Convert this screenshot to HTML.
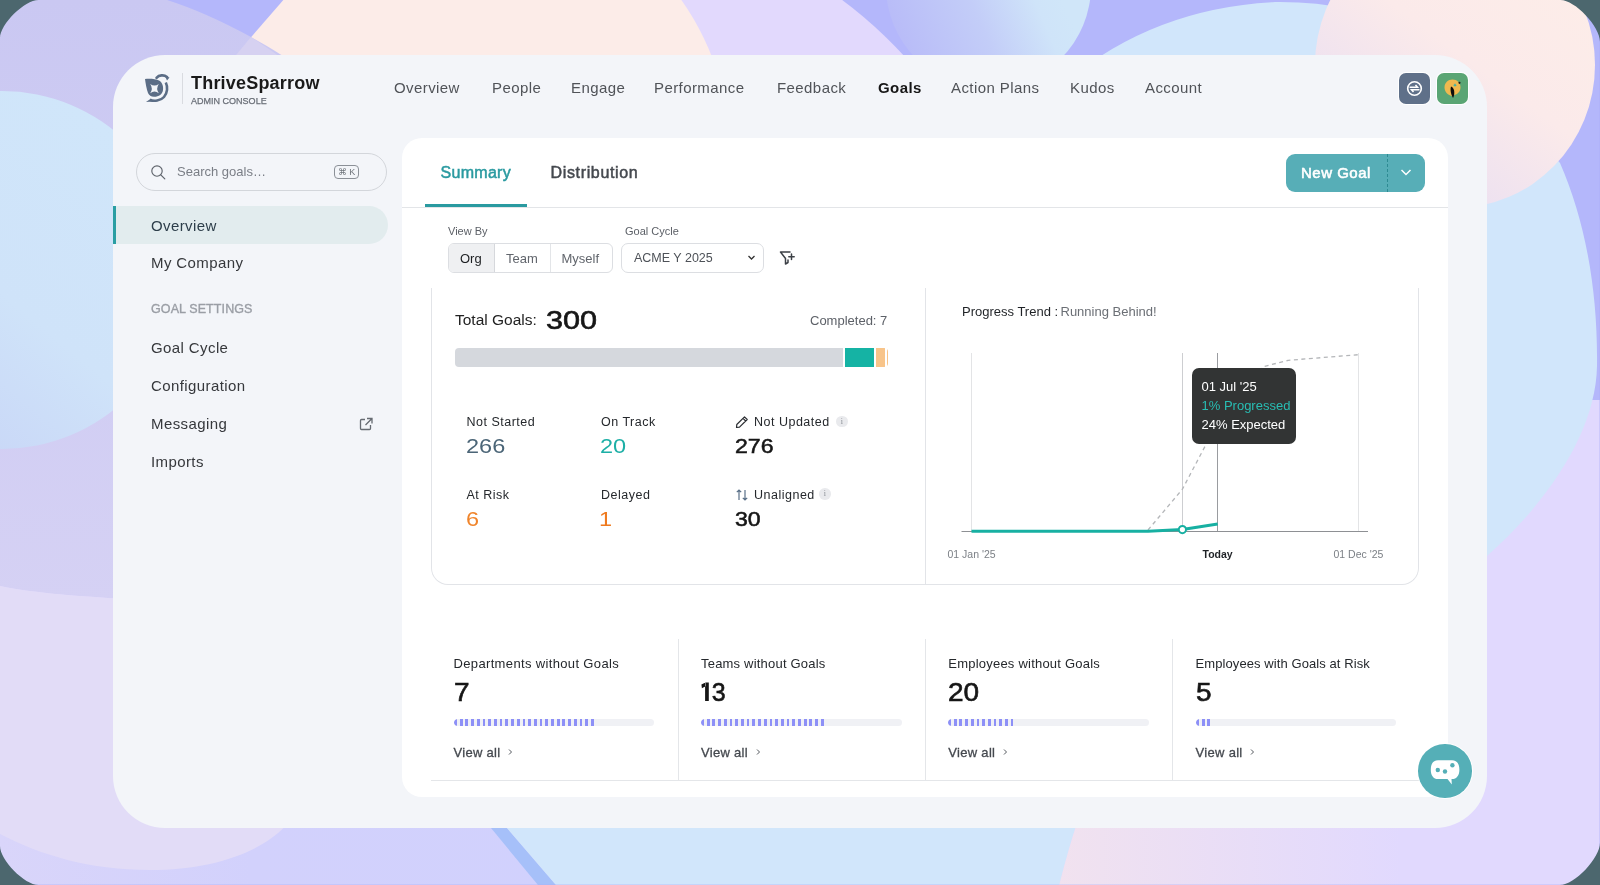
<!DOCTYPE html>
<html><head><meta charset="utf-8">
<style>
*{box-sizing:border-box;margin:0;padding:0}
html,body{width:1600px;height:885px;overflow:hidden;background:#4c676e}
body{font-family:"Liberation Sans",sans-serif;position:relative}
.a{position:absolute}
.t{position:absolute;white-space:nowrap;line-height:1}
#frame{will-change:transform;position:absolute;left:0;top:0;width:1600px;height:885px;overflow:hidden;background:#e1d9fe}
#card{position:absolute;left:113px;top:55px;width:1374px;height:773px;border-radius:52px;background:#f3f5f9}
.nav{font-size:15px;letter-spacing:0.42px;color:#505358;top:80px!important}
.side{font-size:15px;letter-spacing:0.4px;color:#36383c}
.sl{font-size:12.5px;color:#25282c;letter-spacing:0.5px}
.sn{font-size:21px;transform:scaleX(1.12);transform-origin:0 0}
.info{width:11.5px;height:11.5px;border-radius:50%;background:#e9eaed;}
.info::after{content:"i";position:absolute;left:0;top:0;width:11.5px;text-align:center;font-size:8px;line-height:11.5px;color:#8a8e94;font-family:"Liberation Serif",serif}
.ct{font-size:13px;color:#25282c;top:657px;letter-spacing:0.35px}
.cn{font-size:25px;-webkit-text-stroke:0.6px #161616;color:#161616;top:680px;transform:scaleX(1.12);transform-origin:0 0}
.bar{top:718.75px;width:200.5px;height:7.25px;border-radius:4px;background:#f0f1f5;overflow:hidden}
.fill{height:100%;background:repeating-linear-gradient(90deg,#8d90f7 0 2.8px,transparent 2.8px 5.71px);border-radius:4px 0 0 4px}
.va{font-size:13px;color:#45494f;top:745.5px;letter-spacing:0.3px;-webkit-text-stroke:0.3px #45494f}
#panel{position:absolute;left:402px;top:138px;width:1046px;height:659px;border-radius:20px;background:#fff}
</style></head>
<body>
<div id="frame">
<svg class="a" style="left:0;top:0" width="1600" height="885" viewBox="0 0 1600 885">
<defs>
<linearGradient id="gLav" x1="0" y1="0" x2="0" y2="1"><stop offset="0" stop-color="#cac8f2"/><stop offset="1" stop-color="#d5d1f4"/></linearGradient>
<linearGradient id="gBlueC" gradientUnits="userSpaceOnUse" x1="905" y1="62" x2="1060" y2="-5"><stop offset="0" stop-color="#b8bbf8"/><stop offset="0.5" stop-color="#c3cdf8"/><stop offset="0.85" stop-color="#cfe4f9"/><stop offset="1" stop-color="#d0e6f9"/></linearGradient>
<linearGradient id="gPeach" x1="0.8" y1="0.05" x2="0.15" y2="0.95"><stop offset="0" stop-color="#fdede8"/><stop offset="0.45" stop-color="#fbeaea"/><stop offset="1" stop-color="#e5dcf4"/></linearGradient>
<linearGradient id="gPinkB" x1="0" y1="0" x2="1" y2="0"><stop offset="0" stop-color="#f1e2ef"/><stop offset="0.9" stop-color="#e1d9fe"/></linearGradient>
<linearGradient id="gBlueL" x1="0.8" y1="0.1" x2="0.1" y2="0.95"><stop offset="0" stop-color="#d0e6fa"/><stop offset="0.5" stop-color="#cfe3f9"/><stop offset="1" stop-color="#c6d2f6"/></linearGradient>
<linearGradient id="gBotL" x1="0" y1="0" x2="1" y2="0"><stop offset="0" stop-color="#d9d5fa"/><stop offset="0.45" stop-color="#d2d1fc"/><stop offset="1" stop-color="#d1d1fd"/></linearGradient>
</defs>
<rect x="0" y="0" width="1600" height="885" fill="#e1d9fe"/>
<path d="M0,0 H1600 V400 H1480 V80 H0 Z" fill="#b4b7fb"/>
<path d="M600,-10 L828,-10 Q880,25 925,80 L600,80 Z" fill="#e2d9fd"/>
<path d="M292,-10 L214,80 L720,80 Q705,30 674,-10 Z" fill="#fcece8"/>
<path d="M0,0 L167,0 Q205,12 251,37 T305,75 L300,605 Q60,600 0,586 Z" fill="url(#gLav)"/>
<path d="M251,37 L222,72 L300,72 Q280,56 251,37 Z" fill="#d6d1f1"/>
<circle cx="988.5" cy="-14" r="102.5" fill="url(#gBlueC)"/>
<path d="M1068,80 Q1155,8 1275,2 Q1440,0 1540,140 L1560,163 C1585,220 1598,290 1597,366 C1596,430 1550,500 1487,556 L1300,600 Z" fill="#d1e6fb"/>
<ellipse cx="1455" cy="65" rx="140" ry="143" fill="url(#gPeach)"/>
<circle cx="2" cy="270" r="179" fill="url(#gBlueL)"/>
<rect x="0" y="780" width="560" height="105" fill="url(#gBotL)"/>
<path d="M0,586 Q60,600 300,605 L300,800 C290,840 230,870 150,870 C90,870 40,855 0,834 Z" fill="#e2dcf7"/>
<path d="M484.4,820 L500.1,820 L560.3,890 L542.1,890 Z" fill="#a6c0f9"/>
<path d="M500.1,820 L1078,820 Q1068,850 1058,890 L560.3,890 Z" fill="#d1e6fb"/>
<path d="M1078,800 L1440,800 L1440,890 L1058,890 Q1068,850 1078,820 Z" fill="url(#gPinkB)"/>
</svg>
<div id="card"></div>
<div id="panel"></div>


<!-- sidebar -->
<div class="a" style="left:136px;top:153px;width:251px;height:38px;border:1px solid #d3d6db;border-radius:19px"></div>
<svg class="a" style="left:150px;top:164px" width="17" height="17" viewBox="0 0 17 17"><circle cx="7" cy="7" r="5.2" stroke="#5e636b" stroke-width="1.15" fill="none"/><path d="M10.8,10.8 L14.8,14.8" stroke="#5e636b" stroke-width="1.2" stroke-linecap="round"/></svg>
<div class="t" style="left:177px;top:165px;font-size:13px;color:#7a7e86">Search goals&#8230;</div>
<div class="a" style="left:334px;top:165px;width:25px;height:14px;border:1px solid #8b9097;border-radius:4px;font-size:9px;color:#6e737a;line-height:12px;text-align:center">&#8984; K</div>
<div class="a" style="left:113px;top:206px;width:275px;height:38px;background:#e2ecee;border-radius:0 19px 19px 0"></div>
<div class="a" style="left:113px;top:206px;width:3px;height:38px;background:#2a9ea3"></div>
<div class="t side" style="left:151px;top:218px;color:#2d3e4a">Overview</div>
<div class="t side" style="left:151px;top:255px">My Company</div>
<div class="t" style="left:151px;top:303px;font-size:12.5px;color:#9a9ea5;letter-spacing:0.1px;-webkit-text-stroke:0.35px #9a9ea5">GOAL SETTINGS</div>
<div class="t side" style="left:151px;top:340px">Goal Cycle</div>
<div class="t side" style="left:151px;top:378px">Configuration</div>
<div class="t side" style="left:151px;top:416px">Messaging</div>
<svg class="a" style="left:358px;top:416px" width="16" height="16" viewBox="0 0 16 16"><path d="M7,3.5 H3.5 Q2.5,3.5 2.5,4.5 V12.5 Q2.5,13.5 3.5,13.5 H11.5 Q12.5,13.5 12.5,12.5 V9" stroke="#666b72" stroke-width="1.3" fill="none"/><path d="M9,2.5 H14 V7.5 M14,2.5 L7.5,9" stroke="#666b72" stroke-width="1.3" fill="none"/></svg>
<div class="t side" style="left:151px;top:454px">Imports</div>


<!-- panel content -->
<div class="t" style="left:440.5px;top:164.5px;font-size:16px;color:#2a9aa0;-webkit-text-stroke:0.5px #2a9aa0;letter-spacing:0.3px">Summary</div>
<div class="t" style="left:550.5px;top:164.5px;font-size:16px;color:#45494f;-webkit-text-stroke:0.5px #45494f;letter-spacing:0.65px">Distribution</div>
<div class="a" style="left:402px;top:207px;width:1046px;height:1px;background:#e3e5e8"></div>
<div class="a" style="left:425px;top:204px;width:102px;height:3px;background:#2a9aa0"></div>
<a class="a" style="left:1286px;top:154px;width:139px;height:38px;border-radius:9px;background:#57aeb7"></a>
<div class="t" style="left:1301px;top:165px;font-size:15px;color:#fff;-webkit-text-stroke:0.55px #fff;letter-spacing:0.5px">New Goal</div>
<div class="a" style="left:1387px;top:154px;width:0;height:38px;border-left:1px dashed #2d8a92"></div>
<svg class="a" style="left:1400px;top:167px" width="12" height="10" viewBox="0 0 12 10"><path d="M1.5,3 L6,7.5 L10.5,3" stroke="#fff" stroke-width="1.5" fill="none"/></svg>

<div class="t" style="left:448px;top:225.5px;font-size:11px;color:#5b5f66">View By</div>
<div class="t" style="left:625px;top:225.5px;font-size:11px;color:#5b5f66">Goal Cycle</div>
<div class="a" style="left:448px;top:242.5px;width:165px;height:30px;border:1px solid #dcdee2;border-radius:6px;overflow:hidden">
 <div class="a" style="left:0;top:0;width:46px;height:28px;background:#eff0f2;border-right:1px solid #d6d8dc"></div>
 <div class="a" style="left:101px;top:0;width:1px;height:28px;background:#e3e5e8"></div>
</div>
<div class="t" style="left:460px;top:252px;font-size:13px;color:#1d1f22">Org</div>
<div class="t" style="left:506px;top:252px;font-size:13px;color:#61656c">Team</div>
<div class="t" style="left:561.5px;top:252px;font-size:13px;color:#61656c">Myself</div>
<div class="a" style="left:621px;top:243px;width:143px;height:30px;border:1px solid #dcdee2;border-radius:7px"></div>
<div class="t" style="left:634px;top:252px;font-size:12.5px;color:#4e5258">ACME Y 2025</div>
<svg class="a" style="left:747px;top:254px" width="9" height="7" viewBox="0 0 9 7"><path d="M1.5,2 L4.5,5 L7.5,2" stroke="#333" stroke-width="1.3" fill="none"/></svg>
<svg class="a" style="left:778px;top:249px" width="18" height="18" viewBox="0 0 18 18"><path d="M2.5,3 H12 M2.5,3 L7.5,9.5 V15 L10,13.5 V11" stroke="#3c4046" stroke-width="1.5" fill="none" stroke-linejoin="round" stroke-linecap="round"/><path d="M13.5,5 V10.5 M10.8,7.8 H16.2" stroke="#3c4046" stroke-width="1.5" stroke-linecap="round"/></svg>

<!-- stats card -->
<div class="a" style="left:431px;top:288px;width:988px;height:297px;border:1px solid #e2e4e8;border-top:none;border-radius:0 0 17px 17px"></div>
<div class="a" style="left:925px;top:288px;width:1px;height:296px;background:#e2e4e8"></div>
<div class="t" style="left:455px;top:312px;font-size:15.5px;color:#222">Total Goals:</div>
<div class="t" style="left:545.5px;top:307.5px;font-size:25.5px;color:#161616;-webkit-text-stroke:0.6px #161616;transform:scaleX(1.2);transform-origin:0 0">300</div>
<div class="t" style="left:810px;top:314px;font-size:13px;color:#5d6168">Completed: 7</div>
<div class="a" style="left:455px;top:347.5px;width:433px;height:19px;border-radius:4px;overflow:hidden;background:#fff">
 <div class="a" style="left:0;top:0;width:388px;height:19px;background:#d5d8dd"></div>
 <div class="a" style="left:390px;top:0;width:29px;height:19px;background:#15b3a4"></div>
 <div class="a" style="left:421px;top:0;width:9px;height:19px;background:#f8c489"></div>
 <div class="a" style="left:431.5px;top:1px;width:1.5px;height:17px;background:#f8c489"></div>
</div>


<!-- stats grid -->
<div class="t sl" style="left:466.5px;top:416px">Not Started</div>
<div class="t sn" style="left:466.5px;top:435px;color:#4b6577;margin-left:-1px">266</div>
<div class="t sl" style="left:601px;top:416px">On Track</div>
<div class="t sn" style="left:600px;top:435px;color:#1dafa6">20</div>
<svg class="a" style="left:735px;top:415px" width="14" height="14" viewBox="0 0 14 14"><path d="M9.5,1.8 L12.2,4.5 L4.5,12.2 L1.5,12.5 L1.8,9.5 Z M8,3.3 L10.7,6" stroke="#2a2d31" stroke-width="1.2" fill="none" stroke-linejoin="round"/></svg>
<div class="t sl" style="left:754px;top:416px">Not Updated</div>
<div class="a info" style="left:836px;top:415.5px"></div>
<div class="t sn" style="left:735px;top:435px;color:#161616;-webkit-text-stroke:0.55px #161616;transform:scaleX(1.1)">276</div>
<div class="t sl" style="left:466.5px;top:489px">At Risk</div>
<div class="t sn" style="left:465.5px;top:508px;color:#f0842a">6</div>
<div class="t sl" style="left:601px;top:489px">Delayed</div>
<div class="t sn" style="left:599px;top:508px;color:#ef7a1e">1</div>
<svg class="a" style="left:735px;top:488px" width="14" height="14" viewBox="0 0 14 14"><path d="M4,12 V2 M1.8,4.2 L4,2 L6.2,4.2 M10,2 V12 M7.8,9.8 L10,12 L12.2,9.8" stroke="#5a7088" stroke-width="1.2" fill="none"/></svg>
<div class="t sl" style="left:754px;top:489px">Unaligned</div>
<div class="a info" style="left:819px;top:488px"></div>
<div class="t sn" style="left:735px;top:508px;color:#161616;-webkit-text-stroke:0.55px #161616;transform:scaleX(1.1)">30</div>

<!-- chart -->
<div class="t" style="left:962px;top:305px;font-size:13px;color:#1f2226">Progress Trend :</div>
<div class="t" style="left:1060.5px;top:305px;font-size:13px;color:#6b6f75">Running Behind!</div>
<svg class="a" style="left:940px;top:340px" width="460" height="240" viewBox="940 340 460 240">
<path d="M971.5,353 V531 M1358.5,353 V531" stroke="#e3e4e6" stroke-width="1"/><path d="M1182.5,353 V531" stroke="#cdced1" stroke-width="1"/>
<path d="M1217.5,353 V531" stroke="#9a9ca0" stroke-width="1"/>
<path d="M961.5,531.5 H1368" stroke="#8e9094" stroke-width="1"/>
<path d="M1148,530 L1182.4,489.2 L1206.9,442.8 L1240,390 L1263.4,366.7 L1288.2,360.3 L1358.3,354.7" stroke="#b4b6b9" stroke-width="1.3" stroke-dasharray="4,3.5" fill="none"/>
<path d="M971.5,531.3 L1148,531.3 L1182.4,529.6 L1217.7,524" stroke="#17b0a2" stroke-width="3" fill="none" stroke-linejoin="round"/>
<circle cx="1182.4" cy="529.6" r="3.6" fill="#fff" stroke="#17b0a2" stroke-width="2"/>
</svg>
<div class="t" style="left:947.5px;top:549px;font-size:10.5px;color:#7c8086">01 Jan '25</div>
<div class="t" style="left:1202.5px;top:549px;font-size:10.5px;font-weight:bold;color:#1f2226">Today</div>
<div class="t" style="left:1333.5px;top:549px;font-size:10.5px;color:#7c8086">01 Dec '25</div>
<div class="a" style="left:1192px;top:368px;width:104px;height:76px;border-radius:7px;background:#323434"></div>
<div class="t" style="left:1201.5px;top:380px;font-size:13px;color:#fff">01 Jul '25</div>
<div class="t" style="left:1201.5px;top:399px;font-size:13px;color:#28bdb3">1% Progressed</div>
<div class="t" style="left:1201.5px;top:418px;font-size:13px;color:#fff">24% Expected</div>

<!-- bottom cards -->
<div class="a" style="left:430.5px;top:779.5px;width:990px;height:1px;background:#e4e6e9"></div>
<div class="a" style="left:677.5px;top:638.5px;width:1px;height:141px;background:#e4e6e9"></div>
<div class="a" style="left:924.5px;top:638.5px;width:1px;height:141px;background:#e4e6e9"></div>
<div class="a" style="left:1172px;top:638.5px;width:1px;height:141px;background:#e4e6e9"></div>
<div class="t ct" style="left:453.5px">Departments without Goals</div>
<div class="t cn" style="left:453.5px">7</div>
<div class="a bar" style="left:453.5px"><div class="fill" style="width:141px"></div></div>
<div class="t va" style="left:453.5px">View all</div>
<svg class="a" style="left:506.0px;top:746.5px" width="8" height="10" viewBox="0 0 8 10"><path d="M3,2.5 L5.5,5 L3,7.5" stroke="#55595f" stroke-width="1" fill="none"/></svg>
<div class="t ct" style="left:701px;letter-spacing:0.2px">Teams without Goals</div>
<svg class="a" style="left:700px;top:680px" width="12" height="24" viewBox="700 680 12 24"><path d="M705.1,682.4 H708.8 V701 H705.1 Z M705.5,682.4 L701.4,684.6 L701.9,688.2 L705.6,686.2 Z" fill="#161616"/></svg>
<div class="t cn" style="left:711.8px;transform:none">3</div>
<div class="a bar" style="left:701px"><div class="fill" style="width:123.5px"></div></div>
<div class="t va" style="left:701px">View all</div>
<svg class="a" style="left:753.5px;top:746.5px" width="8" height="10" viewBox="0 0 8 10"><path d="M3,2.5 L5.5,5 L3,7.5" stroke="#55595f" stroke-width="1" fill="none"/></svg>
<div class="t ct" style="left:948.3px;letter-spacing:0.22px">Employees without Goals</div>
<div class="t cn" style="left:948.3px">20</div>
<div class="a bar" style="left:948.3px"><div class="fill" style="width:65px"></div></div>
<div class="t va" style="left:948.3px">View all</div>
<svg class="a" style="left:1000.8px;top:746.5px" width="8" height="10" viewBox="0 0 8 10"><path d="M3,2.5 L5.5,5 L3,7.5" stroke="#55595f" stroke-width="1" fill="none"/></svg>
<div class="t ct" style="left:1195.6px;letter-spacing:0.08px">Employees with Goals at Risk</div>
<div class="t cn" style="left:1195.6px">5</div>
<div class="a bar" style="left:1195.6px"><div class="fill" style="width:15px"></div></div>
<div class="t va" style="left:1195.6px">View all</div>
<svg class="a" style="left:1248.1px;top:746.5px" width="8" height="10" viewBox="0 0 8 10"><path d="M3,2.5 L5.5,5 L3,7.5" stroke="#55595f" stroke-width="1" fill="none"/></svg>

<!-- chat -->
<div class="a" style="left:1417px;top:743px;width:56px;height:56px;border-radius:50%;background:#fff"></div>
<div class="a" style="left:1418.2px;top:744.3px;width:53.6px;height:53.6px;border-radius:50%;background:#55afb7"></div>
<svg class="a" style="left:1428px;top:757px" width="34" height="30" viewBox="0 0 34 30"><path d="M10,3.3 H24 C28.5,3.3 31.4,6.5 31.4,12.7 C31.4,18.5 28.5,22 24,22 H23.5 L23.8,27.5 L19.5,22 H10 C5.5,22 2.8,18.5 2.8,12.7 C2.8,6.5 5.5,3.3 10,3.3 Z" fill="#fff"/><circle cx="9.8" cy="13" r="2.2" fill="#55afb7"/><circle cx="17" cy="14.5" r="2.2" fill="#55afb7"/><circle cx="24.4" cy="8.2" r="2.2" fill="#55afb7"/></svg>

<!-- header -->
<svg class="a" style="left:138px;top:68px" width="40" height="40" viewBox="0 0 40 40">
<path d="M7,11 C12,10.5 18,11 21,12.5 C24.5,14.5 25.5,18.5 25,22 C24.5,26 21,28.8 16,28.8 C13,28.8 11,27 10,25 C8.5,21 7.5,15 7,11 Z M12.2,16 Q16.5,19.2 20.8,16 Q17.6,20.5 20.8,25.2 Q16.5,22 12.2,25.2 Q15.4,20.5 12.2,16 Z" fill="#5b6d86" fill-rule="evenodd"/>
<path d="M18.5,9.8 C21,7 26,6.5 29,9" stroke="#5b6d86" stroke-width="2.6" fill="none" stroke-linecap="round"/>
<path d="M27,8 L31.5,9.5 L29,12.5 Z" fill="#5b6d86"/>
<path d="M27.8,14.5 C30,19 29.5,25 26,29 C22.5,33 16,33.5 12,32" stroke="#5b6d86" stroke-width="2.6" fill="none"/>
<path d="M13,30.5 L8,34 L15,33.6 Z" fill="#5b6d86"/>
</svg>
<div class="a" style="left:182px;top:73px;width:1px;height:31px;background:#d9dbe0"></div>
<div class="t" id="brand" style="left:191px;top:74px;font-size:18px;font-weight:bold;color:#1a1a1a;letter-spacing:0.2px">ThriveSparrow</div>
<div class="t" id="adm" style="left:191px;top:95.5px;font-size:9.6px;font-weight:normal;color:#676c75;letter-spacing:0;-webkit-text-stroke:0.25px #676c75;transform:scaleX(0.94);transform-origin:0 0">ADMIN CONSOLE</div>
<div class="t nav" style="left:394px;top:80px">Overview</div>
<div class="t nav" style="left:492px;top:80px">People</div>
<div class="t nav" style="left:571px;top:80px">Engage</div>
<div class="t nav" style="left:654px;top:80px">Performance</div>
<div class="t nav" style="left:777px;top:80px">Feedback</div>
<div class="t nav" style="left:878px;top:80px;font-weight:bold;color:#161616">Goals</div>
<div class="t nav" style="left:951px;top:80px">Action Plans</div>
<div class="t nav" style="left:1070px;top:80px">Kudos</div>
<div class="t nav" style="left:1145px;top:80px">Account</div>
<div class="a" style="left:1398px;top:72px;width:33px;height:33px;border-radius:8px;background:#fff;padding:1px">
 <div style="width:31px;height:31px;border-radius:7px;background:#5f7089;position:relative">
  <svg class="a" style="left:7px;top:7px" width="17" height="17" viewBox="0 0 17 17"><circle cx="8.5" cy="8.5" r="6.8" stroke="#fff" stroke-width="1.6" fill="none"/><path d="M3.5,7.3 H11.5 L9.5,5 M13.5,9.7 H5.5 L7.5,12" stroke="#fff" stroke-width="1.5" fill="none"/></svg>
 </div>
</div>
<div class="a" style="left:1436px;top:72px;width:33px;height:33px;border-radius:8px;background:#fff;padding:1px">
 <div style="width:31px;height:31px;border-radius:7px;background:#5aa574;position:relative">
  <svg class="a" style="left:0;top:0" width="31" height="31" viewBox="0 0 31 31"><path d="M15.5,6.5 C20,6.5 23.5,9.8 23.5,14.2 C23.5,18.5 20.5,21.5 17,22 L15.5,23 C11,22.5 7.5,18.8 7.5,14.5 C7.5,9.8 11,6.5 15.5,6.5 Z" fill="#f0b94f"/><path d="M14,13.5 C16,14 17.5,16.5 17.3,20 C17.2,22.5 16.5,24.5 16,25 C14.8,23 13.8,20 13.6,17.5 C13.5,15.8 13.6,14.5 14,13.5 Z" fill="#0d0d0d"/><path d="M18,10.3 L18.6,11.6 L19.9,12.2 L18.6,12.8 L18,14.1 L17.4,12.8 L16.1,12.2 L17.4,11.6 Z" fill="#2bb3b0"/><circle cx="22.5" cy="9.8" r="1.1" fill="#1c1c1c"/></svg>
 </div>
</div>

<div class="a" style="left:1599px;top:0;width:1px;height:885px;background:rgba(170,172,250,0.35)"></div>
<div class="a" style="left:0;top:884px;width:1600px;height:1px;background:rgba(170,172,250,0.3)"></div>
<svg class="a" style="left:0;top:0" width="1600" height="885" viewBox="0 0 1600 885"><g fill="#4c676e">
<path d="M0,0 H38.5 C24.6,0 0,24.3 0,38 Z"/>
<path d="M1600,0 H1560.5 C1575,0 1600,26.5 1600,41.8 Z"/>
<path d="M1600,885 H1560 C1574.5,885 1600,858 1600,842.7 Z"/>
<path d="M0,885 H38.5 C24.6,885 0,860 0,846 Z"/>
</g></svg>
</div>
</body></html>
